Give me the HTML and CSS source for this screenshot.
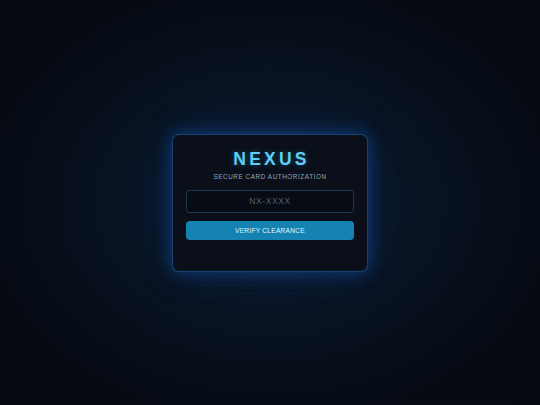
FILE: index.html
```html
<!DOCTYPE html>
<html>
<head>
<meta charset="utf-8">
<link rel="stylesheet" href="styles.css">
</head>
<body>
<div class="screen">
  <div class="card">
    <h1 class="title">NEXUS</h1>
    <p class="subtitle">SECURE CARD AUTHORIZATION</p>
    <input class="field" type="text" placeholder="NX-XXXX">
    <button class="btn">VERIFY CLEARANCE</button>
    <div class="status"></div>
  </div>
</div>
</body>
</html>
```
FILE: styles.css
```css
html, body {
  margin: 0;
  padding: 0;
  width: 540px;
  height: 405px;
  overflow: hidden;
}
body {
  background: #05080f;
  font-family: "Liberation Sans", Arial, sans-serif;
}
.screen {
  width: 540px;
  height: 405px;
  display: flex;
  align-items: center;
  justify-content: center;
  background:
    repeating-linear-gradient(0deg, rgba(60,120,200,0.022) 0 1px, transparent 1px 4px),
    repeating-linear-gradient(90deg, rgba(60,120,200,0.022) 0 1px, transparent 1px 4px),
    radial-gradient(ellipse 300px 230px at 50% 50%, #0c1c31 0%, #08111f 55%, #05080f 100%);
}
.card {
  box-sizing: border-box;
  width: 196px;
  height: 138px;
  padding: 14px 13px 0;
  background: #0a0f1a;
  border: 1px solid rgba(35, 100, 170, 0.6);
  border-radius: 7px;
  box-shadow: 0 0 18px rgba(20, 110, 220, 0.45), 0 0 40px rgba(20, 90, 200, 0.15);
  display: flex;
  flex-direction: column;
  align-items: stretch;
}
.title {
  margin: 0;
  text-align: center;
  font-size: 17.5px;
  line-height: 20px;
  font-weight: bold;
  letter-spacing: 3.2px;
  color: #5ecef5;
  text-shadow: 0 0 6px rgba(70, 190, 250, 0.35);
  padding-left: 3px;
}
.subtitle {
  margin: 3px 0 0;
  text-align: center;
  font-size: 6.3px;
  line-height: 9px;
  letter-spacing: 0.6px;
  color: #94a9bb;
}
.field {
  box-sizing: border-box;
  margin-top: 9px;
  height: 23px;
  width: 100%;
  background: #070b14;
  border: 1px solid rgba(50, 110, 160, 0.45);
  border-radius: 4px;
  text-align: center;
  font-family: "Liberation Sans", Arial, sans-serif;
  font-size: 8.5px;
  letter-spacing: 0.6px;
  color: #c0d0e0;
  outline: none;
  padding: 0;
}
.field::placeholder {
  color: #56606c;
}
.btn {
  margin-top: 8px;
  height: 19px;
  width: 100%;
  background: #1583b2;
  border: none;
  border-radius: 4px;
  font-family: "Liberation Sans", Arial, sans-serif;
  font-size: 6.7px;
  letter-spacing: 0.2px;
  color: #e2f3fb;
  padding: 0;
}
```
